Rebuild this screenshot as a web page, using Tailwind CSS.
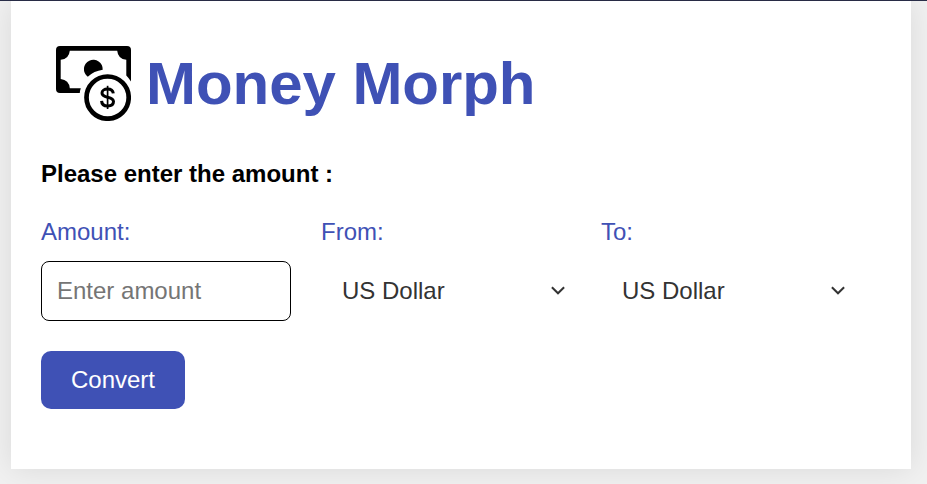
<!DOCTYPE html>
<html lang="en">
<head>
<meta charset="utf-8">
<title>Money Morph</title>
<script src="https://cdn.jsdelivr.net/npm/@tailwindcss/browser@4"></script>
</head>
<body class="h-[484px] overflow-hidden bg-[#f1f1f1] font-['Liberation_Sans',Arial,sans-serif] text-2xl leading-[28px]">
<div class="h-px bg-[#2a2e49]"></div>
<main class="ml-[11px] h-[468px] w-[900px] bg-white px-[30px] pt-[45px] shadow-[0_0_30px_rgba(0,0,0,0.1)]">
  <header class="flex h-[75px] items-center gap-[15px] pl-[15px]">
    <svg class="size-[75px] shrink-0" viewBox="0 0 75 75">
      <path fill-rule="evenodd" d="M4 0H71Q75 0 75 4V35.500Q72.800 32 70.300 29.500V13.800Q62 13 61.200 4.700H13.800Q13 13 4.700 13.800V33Q13 33.800 13.800 42.300H24.800Q24 44.500 23.800 47H4Q0 47 0 43V4Q0 0 4 0Z"/>
      <path d="M31.800 30.800A9.400 9.400 0 1 1 46.700 23.800Q38 25 31.800 30.800Z"/>
      <circle cx="51.600" cy="51.600" r="21.100" fill="none" stroke="black" stroke-width="4.700"/>
      <path fill="none" stroke="black" stroke-width="3" d="M57.300 47.400C56.900 44.100 54.600 43.100 51.500 43.100C48.300 43.100 46 44.600 46 47C46 53 57.500 49.300 57.500 55.600C57.500 58.500 55 60 51.700 60C48 60 45.700 58.400 45.600 54.900"/>
      <path fill="none" stroke="black" stroke-width="1.700" d="M51.600 39.800V63"/>
    </svg>
    <h1 class="text-[60px] leading-[69px] font-bold tracking-[-0.05px] whitespace-nowrap text-[#3f51b5]">Money Morph</h1>
  </header>
  <p class="mt-[39px] font-bold text-black">Please enter the amount :</p>
  <form class="mt-[30px]">
    <div class="flex gap-[30px]">
      <div class="w-[250px]">
        <label class="block text-[#3f51b5]" for="amount">Amount:</label>
        <input id="amount" type="text" placeholder="Enter amount" class="mt-[15px] block h-[60px] w-[250px] rounded-[8px] border border-black bg-white px-[15px] outline-none placeholder:text-[#757575]">
      </div>
      <div class="w-[250px]">
        <span class="block text-[#3f51b5]">From:</span>
        <div class="mt-[15px] flex h-[60px] items-center justify-between pr-[5px] pl-[21px] text-[#333]">
          <span>US Dollar</span>
          <svg class="h-[10px] w-[16px]" viewBox="0 0 16 10" fill="none" stroke="#333" stroke-width="2"><path d="M1.900 1.200L8 7.300L14.100 1.200"/></svg>
        </div>
      </div>
      <div class="w-[250px]">
        <span class="block text-[#3f51b5]">To:</span>
        <div class="mt-[15px] flex h-[60px] items-center justify-between pr-[5px] pl-[21px] text-[#333]">
          <span>US Dollar</span>
          <svg class="h-[10px] w-[16px]" viewBox="0 0 16 10" fill="none" stroke="#333" stroke-width="2"><path d="M1.900 1.200L8 7.300L14.100 1.200"/></svg>
        </div>
      </div>
    </div>
    <button type="button" class="mt-[30px] block h-[58px] w-[144px] rounded-[10px] bg-[#3f51b5] text-white">Convert</button>
  </form>
</main>
</body>
</html>
